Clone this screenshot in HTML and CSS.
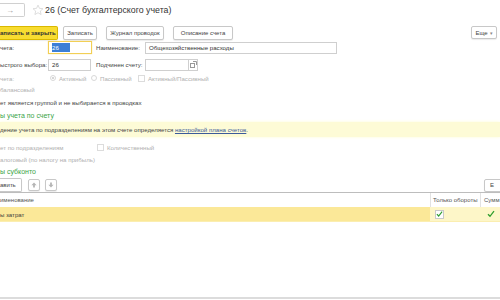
FILE: index.html
```html
<!DOCTYPE html>
<html lang="ru">
<head>
<meta charset="utf-8">
<link rel="stylesheet" href="styles.css">
</head>
<body>
<div class="page">
  <div class="titlebar">
    <span class="navbtn">→</span>
    <svg class="star" width="12" height="12" viewBox="0 0 14 13"><path d="M7 0.8 L8.7 4.6 L12.8 5 L9.7 7.7 L10.6 11.8 L7 9.7 L3.4 11.8 L4.3 7.7 L1.2 5 L5.3 4.6 Z" fill="none" stroke="#d8d8d8" stroke-width="1"/></svg>
    <span class="title">26 (Счет бухгалтерского учета)</span>
  </div>

  <div class="toolbar">
    <span class="btn primary">аписать и закрыть</span>
    <span class="btn">Записать</span>
    <span class="btn">Журнал проводок</span>
    <span class="btn">Описание счета</span>
    <span class="spacer"></span>
    <span class="btn more">Еще <span class="caret">▾</span></span>
  </div>

  <div class="row r1">
    <span class="lbl w48">чета:</span>
    <span class="input focus code"><span class="sel">26</span></span>
    <span class="lbl w53">Наименование:</span>
    <span class="input name">Общехозяйственные расходы</span>
  </div>

  <div class="row r2">
    <span class="lbl w48">ыстрого выбора:</span>
    <span class="input code2">26</span>
    <span class="lbl w54">Подчинен счету:</span>
    <span class="input parent"></span>
    <span class="pick"><svg width="7" height="7" viewBox="0 0 7 7"><rect x="0.5" y="2.5" width="4" height="4" fill="none" stroke="#999"/><path d="M3 0.5h3.5v3.5" fill="none" stroke="#999"/></svg></span>
  </div>

  <div class="row r3 dim">
    <span class="lbl w50">чета:</span>
    <span class="opt o1"><span class="radio"><span class="dot"></span></span>Активный</span>
    <span class="opt o2"><span class="radio"></span>Пассивный</span>
    <span class="opt"><span class="check"></span>Активный/Пассивный</span>
  </div>

  <div class="row line dim">балансовый</div>
  <div class="row line group">ет является группой и не выбирается в проводках</div>

  <div class="heading">ы учета по счету</div>

  <div class="notice">дение учета по подразделениям на этом счете определяется&nbsp;<a class="link">настройкой плана счетов</a>.</div>

  <div class="row line dim r-sub">
    <span class="w97">ет по подразделениям</span>
    <span class="opt"><span class="check"></span>Количественный</span>
  </div>
  <div class="row line dim">алоговый (по налогу на прибыль)</div>

  <div class="heading h2">ы субконто</div>

  <div class="toolbar2">
    <span class="btn add">авить</span>
    <span class="btn sq"><svg width="6" height="6" viewBox="0 0 6 6"><path d="M3 0.5 L5.6 3.3 H3.9 V5.6 H2.1 V3.3 H0.4 Z" fill="#b5b5b5"/></svg></span>
    <span class="btn sq"><svg width="6" height="6" viewBox="0 0 6 6"><path d="M3 5.5 L5.6 2.7 H3.9 V0.4 H2.1 V2.7 H0.4 Z" fill="#b5b5b5"/></svg></span>
    <span class="spacer"></span>
    <span class="btn more2">Е</span>
  </div>

  <div class="table">
    <div class="thead">
      <span class="c1">именование</span>
      <span class="c2">Только обороты</span>
      <span class="c3">Сумм</span>
    </div>
    <div class="trow selected">
      <span class="c1">ы затрат</span>
      <span class="c2"><span class="cbox"><svg width="8" height="8" viewBox="0 0 8 8"><path d="M1 4.2 L3 6.3 L7 1.2" fill="none" stroke="#2e9e2e" stroke-width="1.3"/></svg></span></span>
      <span class="c3"><svg width="8" height="8" viewBox="0 0 8 8"><path d="M1 4.2 L3 6.3 L7 1.2" fill="none" stroke="#2e9e2e" stroke-width="1.3"/></svg></span>
    </div>
    <div class="tbody-rest"></div>
  </div>
  <div class="bottom"></div>
</div>
</body>
</html>
```

FILE: styles.css
```css
html, body {
  margin: 0;
  padding: 0;
  background: #fff;
}
body {
  width: 500px;
  height: 300px;
  overflow: hidden;
  font-family: "Liberation Sans", Arial, sans-serif;
  font-size: 6.1px;
  color: #3c3c3c;
  white-space: nowrap;
}
.page {
  display: flex;
  flex-direction: column;
  height: 300px;
}
.titlebar {
  display: flex;
  align-items: center;
  height: 14px;
  margin-top: 3px;
}
.navbtn {
  box-sizing: border-box;
  width: 25px;
  height: 14px;
  border: 1px solid #d0d0d0;
  border-left: none;
  border-radius: 0 2px 2px 0;
  display: flex;
  align-items: center;
  justify-content: center;
  color: #999;
  font-size: 8px;
  padding-right: 4px;
}
.star {
  margin-left: 7px;
}
.title {
  margin-left: 1px;
  font-size: 8.8px;
  color: #333;
}
.toolbar {
  display: flex;
  align-items: center;
  margin-top: 8px;
  height: 15px;
  padding-right: 3px;
}
.btn {
  box-sizing: border-box;
  height: 14px;
  border: 1px solid #c8c8c8;
  border-radius: 2px;
  display: inline-flex;
  align-items: center;
  justify-content: center;
  padding: 0 7px;
  background: #fff;
  color: #444;
  font-size: 6px;
  margin-right: 9px;
  box-shadow: 0 1px 1px rgba(0,0,0,0.08);
}
.btn.primary {
  width: 58px;
  border: 1px solid #d9b800;
  border-left: none;
  border-radius: 0 2px 2px 0;
  background: #f8dc30;
  color: #333;
  font-weight: bold;
  justify-content: flex-start;
  padding: 0;
  margin-right: 5px;
}
.toolbar .btn:nth-child(2) { width: 34px; padding: 0; }
.toolbar .btn:nth-child(3) { width: 58px; padding: 0; }
.toolbar .btn:nth-child(4) { width: 60px; padding: 0; }
.spacer { flex: 1; }
.btn.more {
  width: 26px;
  height: 13px;
  padding: 0;
  margin-right: 0;
}
.caret { font-size: 5px; margin-left: 2px; color: #888; }

.row {
  display: flex;
  align-items: center;
}
.lbl { color: #444; }
.w48 { width: 48px; flex: none; }
.w53 { width: 53px; flex: none; padding-left: 4px; box-sizing: border-box; }
.w54 { width: 54px; flex: none; padding-left: 5px; box-sizing: border-box; }
.w50 { width: 50px; flex: none; }
.w97 { width: 97px; flex: none; }
.input {
  box-sizing: border-box;
  height: 12px;
  border: 1px solid #cfcfcf;
  display: flex;
  align-items: center;
  padding-left: 3px;
  color: #333;
  background: #fff;
}
.r1 { margin-top: 1px; height: 13px; }
.input.focus {
  border-color: #f2cf55;
  height: 13px;
  box-shadow: 0 0 1px #f6dd7a;
}
.code { width: 44px; }
.sel {
  background: #3c7fd6;
  color: #fff;
  padding: 0 1px 0 0;
  width: 17px;
  line-height: 9px;
}
.name { width: 192px; }
.r2 { margin-top: 4px; height: 13px; }
.code2 { width: 43px; }
.parent { width: 43px; border-right: none; }
.pick {
  box-sizing: border-box;
  width: 10px;
  height: 12px;
  border: 1px solid #cfcfcf;
  display: flex;
  align-items: center;
  justify-content: center;
}
.dim { color: #b0b0b0; }
.dim .lbl { color: #b0b0b0; }
.r3 { margin-top: 2px; height: 10px; }
.opt { display: inline-flex; align-items: center; }
.o1 { width: 41px; }
.o2 { width: 47px; }
.radio {
  box-sizing: border-box;
  width: 6px;
  height: 6px;
  border: 1px solid #d8d8d8;
  border-radius: 50%;
  margin-right: 3px;
  display: inline-flex;
  align-items: center;
  justify-content: center;
}
.dot { width: 2px; height: 2px; border-radius: 50%; background: #c8c8c8; }
.check {
  box-sizing: border-box;
  width: 7px;
  height: 7px;
  border: 1px solid #dcdcdc;
  margin-right: 3px;
}
.line { height: 12px; }
.group { margin-top: 1px; color: #444; }
.heading {
  color: #3aa548;
  font-size: 7px;
  height: 13px;
  margin-top: 1px;
  display: flex;
  align-items: center;
}
.notice {
  background: #fdfbd6;
  height: 15px;
  display: flex;
  align-items: center;
  color: #444;
  box-shadow: 0 0 3px #fdfbd6;
}
.link { color: #3b5a9a; text-decoration: underline; }
.r-sub { margin-top: 4px; }
.h2 { margin-top: 0; height: 12px; }
.toolbar2 {
  display: flex;
  align-items: center;
  height: 14px;
  margin-top: 1px;
}
.btn.add {
  width: 22px;
  border-left: none;
  border-radius: 0 2px 2px 0;
  padding: 0;
  justify-content: flex-start;
  margin-right: 6px;
}
.btn.sq {
  width: 12px;
  height: 12px;
  padding: 0;
  margin-right: 5px;
}
.btn.more2 {
  width: 18px;
  height: 13px;
  margin-right: -2px;
  justify-content: flex-start;
  padding-left: 5px;
}
.table {
  border-top: 1px solid #bdbdbd;
  margin-top: 0;
  flex: 1;
  display: flex;
  flex-direction: column;
}
.thead, .trow {
  display: flex;
  height: 14px;
  align-items: stretch;
}
.thead { color: #555; font-size: 6px; }
.thead span, .trow span.c1, .trow span.c2, .trow span.c3 {
  display: flex;
  align-items: center;
}
.c1 { width: 430px; flex: none; }
.c2 { width: 50px; flex: none; border-left: 1px solid #e2e2e2; padding-left: 2px; box-sizing: border-box; }
.c3 { flex: 1; border-left: 1px solid #e2e2e2; padding-left: 3px; overflow: hidden; }
.trow .c2, .trow .c3 { border-left: none; }
.selected .c1 { background: #fbe898; }
.selected .c2, .selected .c3 { background: #fdf6c8; }
.selected .c2 { padding-left: 5px; }
.selected .c3 { padding-left: 7px; }
.cbox {
  box-sizing: border-box;
  width: 9px;
  height: 9px;
  border: 1px solid #c9c9c9;
  background: #fff;
  display: inline-flex !important;
  align-items: center;
  justify-content: center;
}
.tbody-rest {
  flex: 1;
  border-top: 1px solid #fbeeb0;
}
.bottom {
  height: 2px;
  background: #dcdcdc;
  margin-bottom: 1px;
}
```
